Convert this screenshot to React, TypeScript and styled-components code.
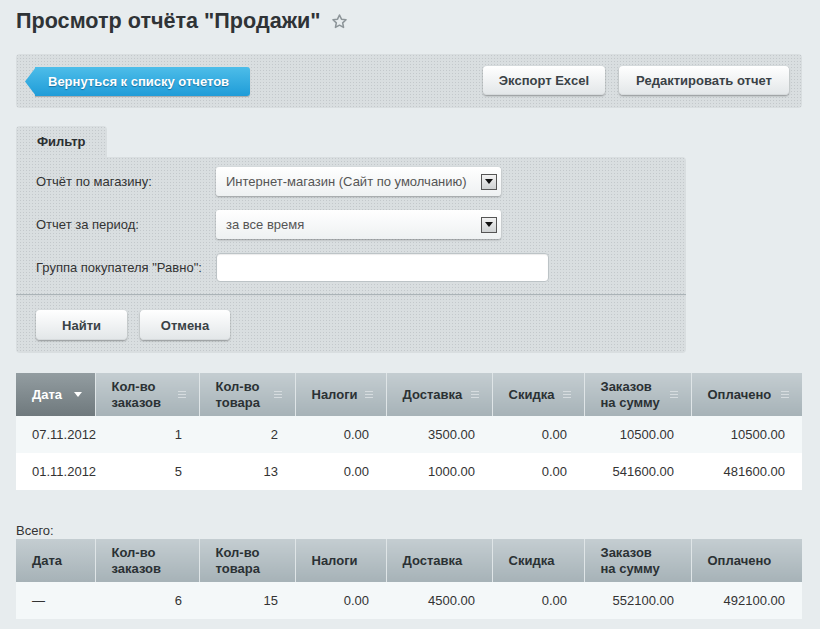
import React from 'react';
import styled, { createGlobalStyle, css } from 'styled-components';

const GlobalStyle = createGlobalStyle`
  body {
    margin: 0;
    background: #e7ecee;
    font-family: "Liberation Sans", Arial, sans-serif;
    font-size: 13px;
    color: #333;
  }
`;

const dotted = css`
  background-color: #d9dee0;
  background-image: radial-gradient(rgba(80, 90, 95, 0.16) 0.7px, transparent 0.9px);
  background-size: 3px 3px;
`;

const Page = styled.div`
  width: 786px;
  padding: 7px 16px 20px;
`;

const TitleRow = styled.div`
  display: flex;
  align-items: center;
  gap: 11px;
  margin-bottom: 19px;
`;

const Title = styled.h1`
  margin: 0;
  font-size: 21.6px;
  line-height: 28px;
  font-weight: bold;
  color: #2f3336;
`;

const Toolbar = styled.div`
  ${dotted};
  border-radius: 4px;
  height: 54px;
  box-sizing: border-box;
  padding: 12px 13px 0 9px;
  display: flex;
  align-items: flex-start;
  gap: 14px;
`;

const BackButton = styled.button`
  position: relative;
  margin: 1px auto 0 10px;
  height: 29px;
  width: 215px;
  border: 0;
  border-radius: 0 3px 3px 0;
  padding: 0 0 0 13px;
  text-align: left;
  font: bold 13px "Liberation Sans", Arial, sans-serif;
  color: #fff;
  text-shadow: 0 1px 1px rgba(0, 60, 100, 0.5);
  background: linear-gradient(#4dbde9, #1f9cd8);
  box-shadow: 0 1px 1px rgba(0, 0, 0, 0.25);
  cursor: pointer;

  &::before {
    content: '';
    position: absolute;
    left: -10px;
    top: 0;
    width: 11px;
    height: 29px;
    background: linear-gradient(#4dbde9, #1f9cd8);
    clip-path: polygon(100% 0, 100% 100%, 0 50%);
  }
`;

const GreyButton = styled.button<{ $w: number; $h?: number }>`
  width: ${p => p.$w}px;
  height: ${p => p.$h ?? 30}px;
  border: 0;
  border-radius: 4px;
  font: bold 13px "Liberation Sans", Arial, sans-serif;
  color: #3a4246;
  background: linear-gradient(#ffffff, #e2e6e8);
  box-shadow: 0 1px 2px rgba(0, 0, 0, 0.35), inset 0 -1px 0 rgba(0, 0, 0, 0.05);
  cursor: pointer;
`;

const FilterWrap = styled.div`
  margin-top: 18px;
  width: 670px;
`;

const Tab = styled.div`
  ${dotted};
  width: 91px;
  height: 31px;
  box-sizing: border-box;
  padding: 8px 0 0 21px;
  border-radius: 4px 4px 0 0;
  font-weight: bold;
  color: #2b2f31;
`;

const FilterPanel = styled.div`
  ${dotted};
  border-radius: 0 4px 4px 4px;
  padding-top: 10px;
`;

const FieldGrid = styled.div`
  display: grid;
  grid-template-columns: 180px auto;
  row-gap: 14px;
  padding: 0 20px 12px;
  align-items: center;
`;

const Label = styled.div`
  color: #333;
`;

const Select = styled.div`
  width: 285px;
  height: 29px;
  box-sizing: border-box;
  display: flex;
  align-items: center;
  justify-content: space-between;
  padding: 0 4px 0 10px;
  border-radius: 3px;
  background: linear-gradient(#ffffff, #eef1f2);
  box-shadow: 0 1px 2px rgba(0, 0, 0, 0.3);
  color: #555;
`;

const DropBox = styled.span`
  width: 16px;
  height: 16px;
  box-sizing: border-box;
  border: 1px solid #555;
  background: linear-gradient(#f2f2f2, #cfd2d3);
  display: flex;
  align-items: center;
  justify-content: center;
`;

const TextInput = styled.input`
  width: 333px;
  height: 29px;
  box-sizing: border-box;
  border: 1px solid #bcc3c6;
  border-radius: 4px;
  background: #fff;
  box-shadow: inset 0 1px 1px rgba(0, 0, 0, 0.08);
  outline: none;
`;

const Divider = styled.div`
  height: 1px;
  background: #aab3b7;
  border-bottom: 1px solid rgba(255, 255, 255, 0.5);
`;

const FilterButtons = styled.div`
  display: flex;
  gap: 13px;
  padding: 14px 20px 13px;
`;

const Table = styled.table`
  width: 786px;
  border-collapse: collapse;
  table-layout: fixed;
`;

const Th = styled.th<{ $active?: boolean }>`
  height: 43px;
  padding: 0;
  text-align: left;
  font-weight: bold;
  font-size: 13px;
  line-height: 16px;
  color: ${p => (p.$active ? '#fff' : '#2b3134')};
  background: ${p =>
    p.$active ? 'linear-gradient(#939da1, #6f797d)' : 'linear-gradient(#c4cdd1, #a6b2b7)'};
  border-left: 1px solid #dfe5e7;
  &:first-child {
    border-left: 0;
  }
`;

const ThInner = styled.div`
  display: flex;
  align-items: center;
  justify-content: space-between;
  padding: 0 13px 0 16px;
`;

const Td = styled.td<{ $left?: boolean }>`
  height: 37px;
  padding: 0 17px 0 16px;
  text-align: ${p => (p.$left ? 'left' : 'right')};
  color: #333;
  font-size: 13px;
  line-height: 16px;
`;

const Tr = styled.tr<{ $alt?: boolean }>`
  background: ${p => (p.$alt ? '#f4f8f9' : '#ffffff')};
`;

const TableBlock = styled.div`
  margin-top: 20px;
`;

const TotalLabel = styled.div`
  margin: 33px 0 0;
  line-height: 16px;
  color: #333;
`;

const Star = () => (
  <svg width="17" height="17" viewBox="0 0 24 24" fill="none" stroke="#8d9599" strokeWidth="2.2" strokeLinejoin="round">
    <path d="M12 2.8l2.8 5.9 6.4.8-4.7 4.4 1.2 6.4L12 17.2l-5.7 3.1 1.2-6.4-4.7-4.4 6.4-.8z" />
  </svg>
);

const SortLines = () => (
  <svg width="8" height="7" viewBox="0 0 8 7">
    <rect x="0" y="0" width="8" height="1" fill="#d6dcdf" />
    <rect x="0" y="3" width="8" height="1" fill="#d6dcdf" />
    <rect x="0" y="6" width="8" height="1" fill="#d6dcdf" />
  </svg>
);

const Arrow = ({ color }: { color: string }) => (
  <svg width="8" height="5" viewBox="0 0 8 5">
    <path d="M0 0h8L4 5z" fill={color} />
  </svg>
);

const columns = [
  { title: 'Дата', w: 79 },
  { title: ['Кол-во', 'заказов'], w: 104 },
  { title: ['Кол-во', 'товара'], w: 96 },
  { title: 'Налоги', w: 91 },
  { title: 'Доставка', w: 106 },
  { title: 'Скидка', w: 92 },
  { title: ['Заказов', 'на сумму'], w: 107 },
  { title: 'Оплачено', w: 111 },
];

const rows = [
  ['07.11.2012', '1', '2', '0.00', '3500.00', '0.00', '10500.00', '10500.00'],
  ['01.11.2012', '5', '13', '0.00', '1000.00', '0.00', '541600.00', '481600.00'],
];

const totals = ['—', '6', '15', '0.00', '4500.00', '0.00', '552100.00', '492100.00'];

const HeadTitle = ({ title }: { title: string | string[] }) =>
  Array.isArray(title) ? (
    <span>
      {title[0]}
      <br />
      {title[1]}
    </span>
  ) : (
    <span>{title}</span>
  );

const ReportTable = ({ data, sortable }: { data: string[][]; sortable?: boolean }) => (
  <Table>
    <colgroup>
      {columns.map((c, i) => (
        <col key={i} style={{ width: c.w }} />
      ))}
    </colgroup>
    <thead>
      <tr>
        {columns.map((c, i) => {
          const active = sortable && i === 0;
          return (
            <Th key={i} $active={active}>
              <ThInner>
                <HeadTitle title={c.title} />
                {sortable && (active ? <Arrow color="#fff" /> : <SortLines />)}
              </ThInner>
            </Th>
          );
        })}
      </tr>
    </thead>
    <tbody>
      {data.map((r, ri) => (
        <Tr key={ri} $alt={ri % 2 === 0}>
          {r.map((v, ci) => (
            <Td key={ci} $left={ci === 0}>
              {v}
            </Td>
          ))}
        </Tr>
      ))}
    </tbody>
  </Table>
);

export default function App() {
  return (
    <Page>
      <GlobalStyle />
      <TitleRow>
        <Title>Просмотр отчёта "Продажи"</Title>
        <Star />
      </TitleRow>

      <Toolbar>
        <BackButton>Вернуться к списку отчетов</BackButton>
        <GreyButton $w={122} $h={29}>Экспорт Excel</GreyButton>
        <GreyButton $w={170} $h={29}>Редактировать отчет</GreyButton>
      </Toolbar>

      <FilterWrap>
        <Tab>Фильтр</Tab>
        <FilterPanel>
          <FieldGrid>
            <Label>Отчёт по магазину:</Label>
            <Select>
              <span>Интернет-магазин (Сайт по умолчанию)</span>
              <DropBox>
                <Arrow color="#111" />
              </DropBox>
            </Select>
            <Label>Отчет за период:</Label>
            <Select>
              <span>за все время</span>
              <DropBox>
                <Arrow color="#111" />
              </DropBox>
            </Select>
            <Label>Группа покупателя "Равно":</Label>
            <TextInput />
          </FieldGrid>
          <Divider />
          <FilterButtons>
            <GreyButton $w={91}>Найти</GreyButton>
            <GreyButton $w={90}>Отмена</GreyButton>
          </FilterButtons>
        </FilterPanel>
      </FilterWrap>

      <TableBlock>
        <ReportTable data={rows} sortable />
      </TableBlock>

      <TotalLabel>Всего:</TotalLabel>
      <ReportTable data={[totals]} />
    </Page>
  );
}
